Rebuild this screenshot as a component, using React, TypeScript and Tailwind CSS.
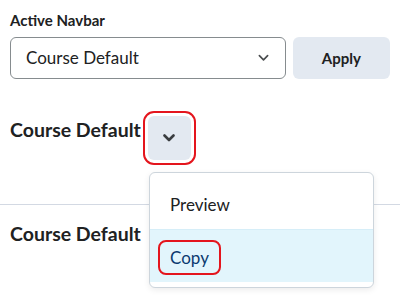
import React from 'react';

const Chevron: React.FC<{ className?: string; strokeWidth?: number }> = ({ className, strokeWidth = 2 }) => (
  <svg viewBox="0 0 12 8" className={className} fill="none" stroke="currentColor" strokeWidth={strokeWidth} strokeLinecap="round" strokeLinejoin="round">
    <path d="M1.5 1.5 L6 6 L10.5 1.5" />
  </svg>
);

export default function App() {
  return (
    <div className="relative w-[400px] h-[306px] overflow-hidden bg-white text-[#202122] font-['Lato','Noto_Sans',sans-serif]">
      <div className="px-[10px] pt-[10px]">
        <div className="text-[15px] leading-[20px] font-bold">Active Navbar</div>
        <div className="flex gap-[7px] mt-[7px]">
          <div className="w-[277px] h-[42px] flex items-center justify-between pl-[15px] pr-[16px] border border-[#868c8f] rounded-[6px]">
            <span className="text-[17px]">Course Default</span>
            <Chevron className="w-[11px] h-[8px] text-[#494c4e]" strokeWidth={1.8} />
          </div>
          <button className="w-[98px] h-[42px] rounded-[6px] bg-[#e3e9f1] text-[15px] font-bold">Apply</button>
        </div>

        <div className="flex items-start gap-[7px] mt-[37px]">
          <div className="text-[19.5px] leading-[26px] font-bold pt-[1px]">Course Default</div>
          <button className="w-[43px] h-[44px] rounded-[6px] bg-[#e3e9f1] flex items-center justify-center outline-2 outline-[#e4151d] outline-offset-[3px]">
            <Chevron className="w-[12px] h-[8px] text-[#3a3d40]" strokeWidth={2.6} />
          </button>
        </div>
      </div>

      <div className="h-px bg-[#d3d9e3] mt-[44px]" />

      <div className="px-[10px] mt-[16px]">
        <div className="text-[19.5px] leading-[26px] font-bold">Course Default</div>
      </div>

      <div className="absolute left-[149px] top-[172px] w-[225px] bg-white border border-[#cdd5dc] rounded-[6px] shadow-[0_2px_6px_rgba(0,0,0,0.08)] pb-[5px] overflow-hidden">
        <div className="h-[56px] pt-[8px] pl-[20px] flex items-center text-[17px] text-[#202122]">Preview</div>
        <div className="h-[53px] pt-[3px] pl-[8px] flex items-center bg-[#e2f5fc] border-t border-[#d6eef8]">
          <span className="inline-flex items-center h-[35px] px-[10px] border-2 border-[#e4151d] rounded-[8px] text-[17px] text-[#0b3a6f]">Copy</span>
        </div>
      </div>
    </div>
  );
}
